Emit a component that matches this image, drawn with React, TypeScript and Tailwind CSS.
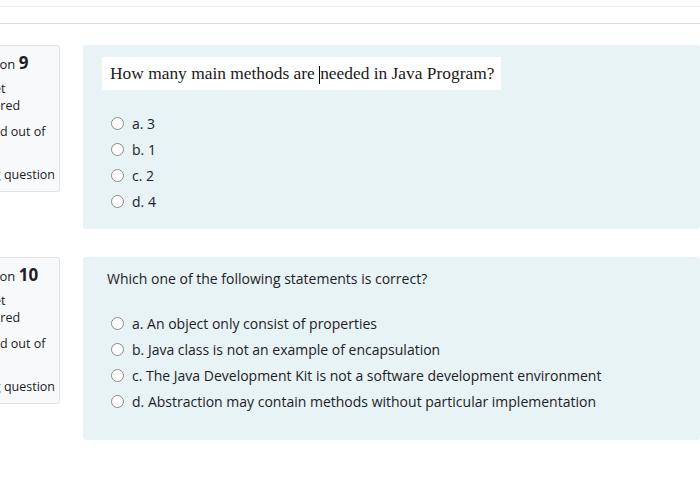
import React from 'react';

interface InfoProps {
  num: number;
}

const QuestionInfo: React.FC<InfoProps> = ({ num }) => {
  return (
    <div className="w-[108px] shrink-0 self-start rounded-[3px] border border-[#dee2e6] bg-[#f8f9fa] pl-[10px] pr-1 pt-[7px] pb-[8px] text-[12.5px] text-[#1d2125]">
      <h3 className="-ml-[3px] whitespace-nowrap text-[13px] leading-[20px]">
        Question <span className="text-[17px] font-bold">{num}</span>
      </h3>
      <div className="mt-[6px] leading-[17px]">
        <div>Not yet</div>
        <div>answered</div>
      </div>
      <div className="mt-[9px] leading-[17px]">
        <div className="whitespace-nowrap">Marked out of</div>
        <div>1.00</div>
      </div>
      <div className="mt-[9px] flex items-center gap-[11px] whitespace-nowrap leading-[17px]">
        <svg width="16" height="16" viewBox="0 0 16 16" fill="none" stroke="#1d2125" strokeWidth="1.4">
          <path d="M3 15V1.5M3 2h9l-2 3 2 3H3" />
        </svg>
        <span>Flag question</span>
      </div>
    </div>
  );
};

const Option: React.FC<{ label: string }> = ({ label }) => (
  <div className="flex h-[26px] items-center">
    <span className="ml-[28px] inline-block h-[13px] w-[13px] shrink-0 rounded-full border border-[#8a8a8a] bg-white" />
    <span className="ml-[8px] whitespace-nowrap">{label}</span>
  </div>
);

export default function App() {
  return (
    <div
      className="relative h-[488px] w-[700px] overflow-hidden bg-white text-[#1d2125]"
      style={{ fontFamily: '"Open Sans", "Noto Sans", sans-serif' }}
    >
      <div className="h-[7px] border-b border-[#f0f0f0]" />
      <div className="h-[17px] border-b border-[#dcdcdc]" />

      <div className="ml-[-48px] mt-[21px] flex gap-[23px]">
        <QuestionInfo num={9} />
        <div className="h-[184px] flex-1 rounded-[3px] bg-[#e7f3f5] pt-[12px] pb-[14px] text-[14px]">
          <div className="ml-[19px] inline-flex h-[33px] items-center bg-white pl-[8px] pr-[7px]">
            <span className="whitespace-nowrap text-[17.4px] text-[#1a1a1a]" style={{ fontFamily: '"Liberation Serif", serif' }}>
              How many main methods are <span className="inline-block h-[18px] w-0 border-l border-black align-middle" />needed in Java Program?
            </span>
          </div>
          <div className="mt-[20px]">
            <Option label="a. 3" />
            <Option label="b. 1" />
            <Option label="c. 2" />
            <Option label="d. 4" />
          </div>
        </div>
      </div>

      <div className="ml-[-48px] mt-[28px] flex gap-[23px]">
        <QuestionInfo num={10} />
        <div className="h-[183px] flex-1 rounded-[3px] bg-[#e7f3f5] pt-[11px] text-[14px]">
          <p className="ml-[24px] leading-[22px]">Which one of the following statements is correct?</p>
          <div className="mt-[20px]">
            <Option label="a. An object only consist of properties" />
            <Option label="b. Java class is not an example of encapsulation" />
            <Option label="c. The Java Development Kit is not a software development environment" />
            <Option label="d. Abstraction may contain methods without particular implementation" />
          </div>
        </div>
      </div>
    </div>
  );
}
